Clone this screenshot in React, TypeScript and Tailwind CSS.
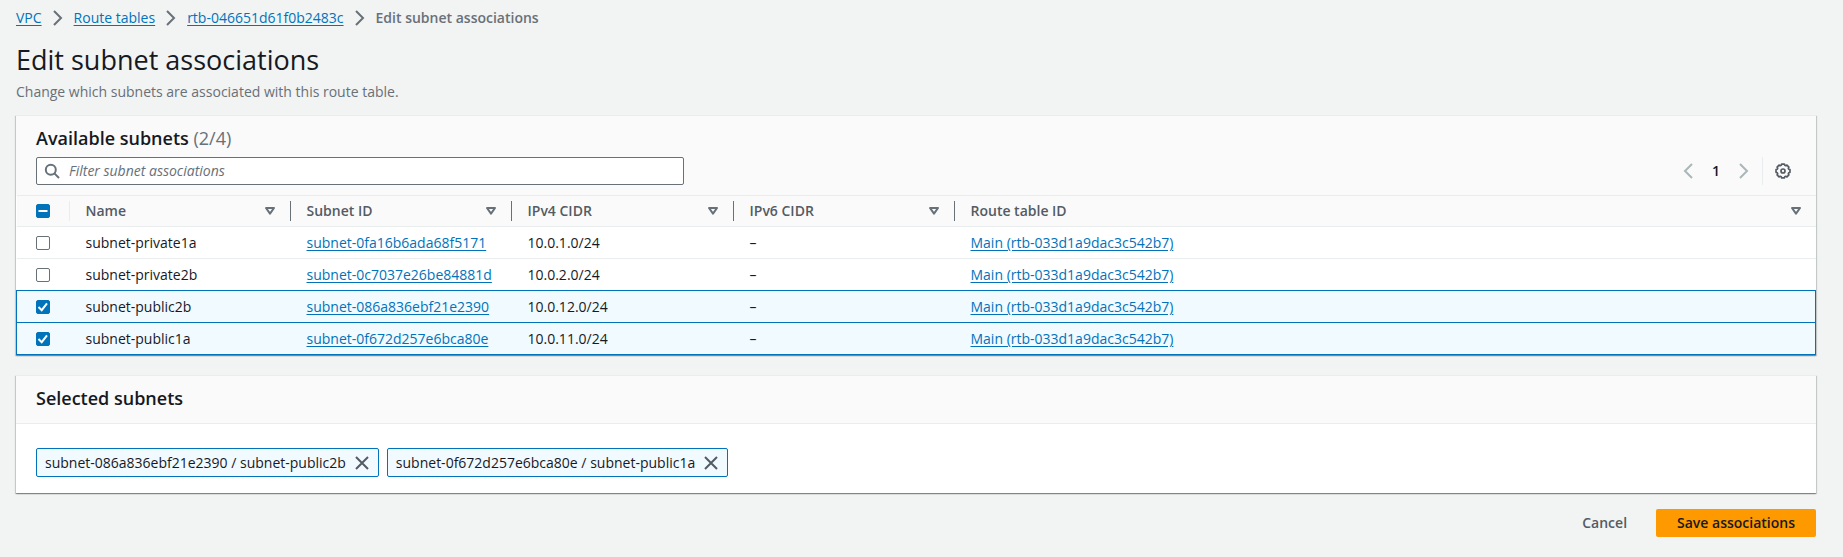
import { useEffect, useRef, useState } from 'react'

type Subnet = { id: string; name: string; ipv4: string; routeTable: string }

const SUBNETS: Subnet[] = [
  { id: 'subnet-0fa16b6ada68f5171', name: 'subnet-private1a', ipv4: '10.0.1.0/24', routeTable: 'Main (rtb-033d1a9dac3c542b7)' },
  { id: 'subnet-0c7037e26be84881d', name: 'subnet-private2b', ipv4: '10.0.2.0/24', routeTable: 'Main (rtb-033d1a9dac3c542b7)' },
  { id: 'subnet-086a836ebf21e2390', name: 'subnet-public2b', ipv4: '10.0.12.0/24', routeTable: 'Main (rtb-033d1a9dac3c542b7)' },
  { id: 'subnet-0f672d257e6bca80e', name: 'subnet-public1a', ipv4: '10.0.11.0/24', routeTable: 'Main (rtb-033d1a9dac3c542b7)' },
]

const COLUMNS = ['Name', 'Subnet ID', 'IPv4 CIDR', 'IPv6 CIDR', 'Route table ID']

const PANEL =
  'border-t border-[#eaeded] bg-white shadow-[0_1px_1px_0_rgba(0,28,36,0.3),1px_1px_1px_0_rgba(0,28,36,0.15),-1px_1px_1px_0_rgba(0,28,36,0.15)]'
const LINK = 'text-[#0073bb] underline underline-offset-2'

function Chevron({ left = false }: { left?: boolean }) {
  return (
    <svg viewBox="0 0 16 16" className="size-4 shrink-0" fill="none" stroke="currentColor" strokeWidth="2" aria-hidden="true">
      <path d={left ? 'M12 1 5 8l7 7' : 'M4 1l7 7-7 7'} />
    </svg>
  )
}

function SortIcon() {
  return (
    <svg viewBox="0 0 16 16" className="size-4" fill="none" stroke="currentColor" strokeWidth="2" strokeLinejoin="round" aria-hidden="true">
      <path d="M4 5h8l-4 5.6z" />
    </svg>
  )
}

function SearchIcon() {
  return (
    <svg viewBox="0 0 16 16" className="size-4 shrink-0" fill="none" stroke="currentColor" strokeWidth="2" aria-hidden="true">
      <circle cx="6.8" cy="6.8" r="5" />
      <path d="m10.4 10.4 4.6 4.6" />
    </svg>
  )
}

// Eight teeth: each contributes two valley points and two crown points.
const GEAR_POINTS = Array.from({ length: 8 }, (_, i) =>
  [
    [-17, 6],
    [-11, 7.1],
    [11, 7.1],
    [17, 6],
  ].map(([offset, radius]) => {
    const a = ((i * 45 + offset) * Math.PI) / 180
    return `${(8 + radius * Math.sin(a)).toFixed(2)},${(8 - radius * Math.cos(a)).toFixed(2)}`
  }),
)
  .flat()
  .join(' ')

function GearIcon() {
  return (
    <svg viewBox="0 0 16 16" className="size-4" fill="none" stroke="currentColor" strokeWidth="1.7" strokeLinejoin="round" aria-hidden="true">
      <polygon points={GEAR_POINTS} />
      <circle cx="8" cy="8" r="2" />
    </svg>
  )
}

function CloseIcon() {
  return (
    <svg viewBox="0 0 16 16" className="size-4" fill="none" stroke="currentColor" strokeWidth="2" aria-hidden="true">
      <path d="m2 2 12 12M14 2 2 14" />
    </svg>
  )
}

function Checkbox({ label, checked, mixed = false, onChange }: { label: string; checked: boolean; mixed?: boolean; onChange: () => void }) {
  const ref = useRef<HTMLInputElement>(null)
  useEffect(() => {
    if (ref.current) ref.current.indeterminate = mixed
  }, [mixed])
  return (
    <label className="grid size-3.5 place-items-center">
      <input
        ref={ref}
        type="checkbox"
        aria-label={label}
        checked={checked}
        onChange={onChange}
        className="col-start-1 row-start-1 size-3.5 appearance-none rounded-[2px] border border-[#687078] bg-white checked:border-[#0073bb] checked:bg-[#0073bb] indeterminate:border-[#0073bb] indeterminate:bg-[#0073bb]"
      />
      {(checked || mixed) && (
        <svg viewBox="0 0 14 14" className="pointer-events-none col-start-1 row-start-1 size-3.5" fill="none" stroke="#fff" strokeWidth="2" aria-hidden="true">
          <path d={mixed ? 'M2.5 7h9' : 'M2.5 7l3.2 3.2L11 3.4'} />
        </svg>
      )}
    </label>
  )
}

export default function App() {
  const [selected, setSelected] = useState<string[]>([SUBNETS[2].id, SUBNETS[3].id])
  const [filter, setFilter] = useState('')
  const toggle = (id: string) => setSelected((s) => (s.includes(id) ? s.filter((x) => x !== id) : [...s, id]))
  const all = selected.length === SUBNETS.length
  const visible = SUBNETS.filter((s) => (s.id + s.name + s.ipv4).includes(filter))

  return (
    <div className="min-h-screen bg-[#f2f3f3] pr-[27px] pb-5 pl-4 font-['Open_Sans',sans-serif] text-[14px] leading-[22px] text-[#16191f]">
      <nav aria-label="Breadcrumbs" className="pt-[7px]">
        <ol className="flex items-center gap-2 text-[#687078]">
          <li><a href="#vpc" className={LINK}>VPC</a></li>
          <li><Chevron /></li>
          <li><a href="#route-tables" className={LINK}>Route tables</a></li>
          <li><Chevron /></li>
          <li><a href="#rtb" className={LINK}>rtb-046651d61f0b2483c</a></li>
          <li><Chevron /></li>
          <li className="font-semibold" aria-current="page">Edit subnet associations</li>
        </ol>
      </nav>

      <header className="mt-[13px]">
        <h1 className="text-[27px] leading-9">Edit subnet associations</h1>
        <p className="mt-[3px] text-[#687078]">Change which subnets are associated with this route table.</p>
      </header>

      <main className="mt-3 flex flex-col gap-5">
        <section className={PANEL}>
          <div className="bg-[#fafafa] px-5 pt-[11px] pb-2.5">
            <h2 className="text-[18px] leading-[22px] font-semibold">
              Available subnets{' '}
              <span className="font-normal text-[#687078]">{`(${selected.length}/${SUBNETS.length})`}</span>
            </h2>
            <div className="mt-2 flex items-center justify-between gap-5">
              <label className="flex h-7 w-full max-w-[648px] items-center gap-[9px] rounded-[2px] border border-[#687078] bg-white px-[7px] text-[#687078]">
                <SearchIcon />
                <input
                  type="search"
                  aria-label="Filter subnet associations"
                  placeholder="Filter subnet associations"
                  value={filter}
                  onChange={(e) => setFilter(e.target.value)}
                  className="min-w-0 flex-1 bg-transparent text-[#16191f] outline-none placeholder:text-[#687078] placeholder:italic"
                />
              </label>
              <div className="flex h-7 items-center pr-[5px]">
                <div className="flex items-center gap-3.5 pr-2.5 text-[#aab7b8]">
                  <button type="button" aria-label="Previous page" disabled><Chevron left /></button>
                  <button type="button" aria-label="Page 1" className="w-3 text-center font-semibold text-[#16191f]">1</button>
                  <button type="button" aria-label="Next page" disabled><Chevron /></button>
                </div>
                <button type="button" aria-label="Preferences" className="flex h-7 items-center border-l border-[#eaeded] pl-3 text-[#545b64]">
                  <GearIcon />
                </button>
              </div>
            </div>
          </div>

          <table className="w-full table-fixed border-collapse text-left">
            <colgroup>
              <col className="w-[53px]" />
              <col className="w-[221px]" />
              <col className="w-[221px]" />
              <col className="w-[222px]" />
              <col className="w-[221px]" />
              <col />
            </colgroup>
            <thead>
              <tr className="h-[31px] border-t border-[#eaeded] bg-[#fafafa] text-[#545b64]">
                <th scope="col" className="p-0">
                  <div className="flex h-5 items-center border-r border-[#eaeded] pl-[19px]">
                    <Checkbox label="Select all subnets" checked={all} mixed={!all && selected.length > 0} onChange={() => setSelected(all ? [] : SUBNETS.map((s) => s.id))} />
                  </div>
                </th>
                {COLUMNS.map((c, i) => (
                  <th key={c} scope="col" className="p-0 font-semibold">
                    <div className={`flex h-5 items-center justify-between pr-3 pl-4 ${i < 4 ? 'border-r border-[#687078]' : ''}`}>
                      {c}
                      <button type="button" aria-label={`Sort by ${c}`} className="text-[#687078]"><SortIcon /></button>
                    </div>
                  </th>
                ))}
              </tr>
            </thead>
            <tbody>
              {visible.map((s) => {
                const on = selected.includes(s.id)
                return (
                  <tr key={s.id} className={`h-8 ${on ? 'border border-[#0073bb] bg-[#f1faff]' : 'border-t border-[#eaeded]'}`}>
                    <td className="p-0 pl-[19px]"><Checkbox label={`Select ${s.name}`} checked={on} onChange={() => toggle(s.id)} /></td>
                    <td className="p-0 pl-4">{s.name}</td>
                    <td className="p-0 pl-4"><a href={`#${s.id}`} className={LINK}>{s.id}</a></td>
                    <td className="p-0 pl-4">{s.ipv4}</td>
                    <td className="p-0 pl-4">–</td>
                    <td className="p-0 pl-4"><a href="#main-route-table" className={LINK}>{s.routeTable}</a></td>
                  </tr>
                )
              })}
            </tbody>
          </table>
        </section>

        <section className={PANEL}>
          <h2 className="border-b border-[#eaeded] bg-[#fafafa] px-5 pt-[11px] pb-3.5 text-[18px] leading-[22px] font-semibold">Selected subnets</h2>
          <ul className="flex flex-wrap gap-2 px-5 pt-6 pb-4">
            {SUBNETS.filter((s) => selected.includes(s.id)).map((s) => (
              <li key={s.id} className="flex h-[29px] items-center gap-2 rounded-[2px] border border-[#0073bb] bg-[#f1faff] px-2">
                {s.id} / {s.name}
                <button type="button" aria-label={`Remove ${s.name}`} onClick={() => toggle(s.id)} className="text-[#545b64]"><CloseIcon /></button>
              </li>
            ))}
          </ul>
        </section>
      </main>

      <footer className="mt-4 flex justify-end gap-2">
        <button type="button" className="h-7 rounded-[2px] px-[21px] font-semibold text-[#545b64]">Cancel</button>
        <button type="submit" className="h-7 rounded-[2px] bg-[#ff9900] px-[21px] font-semibold text-[#16191f]">Save associations</button>
      </footer>
    </div>
  )
}
